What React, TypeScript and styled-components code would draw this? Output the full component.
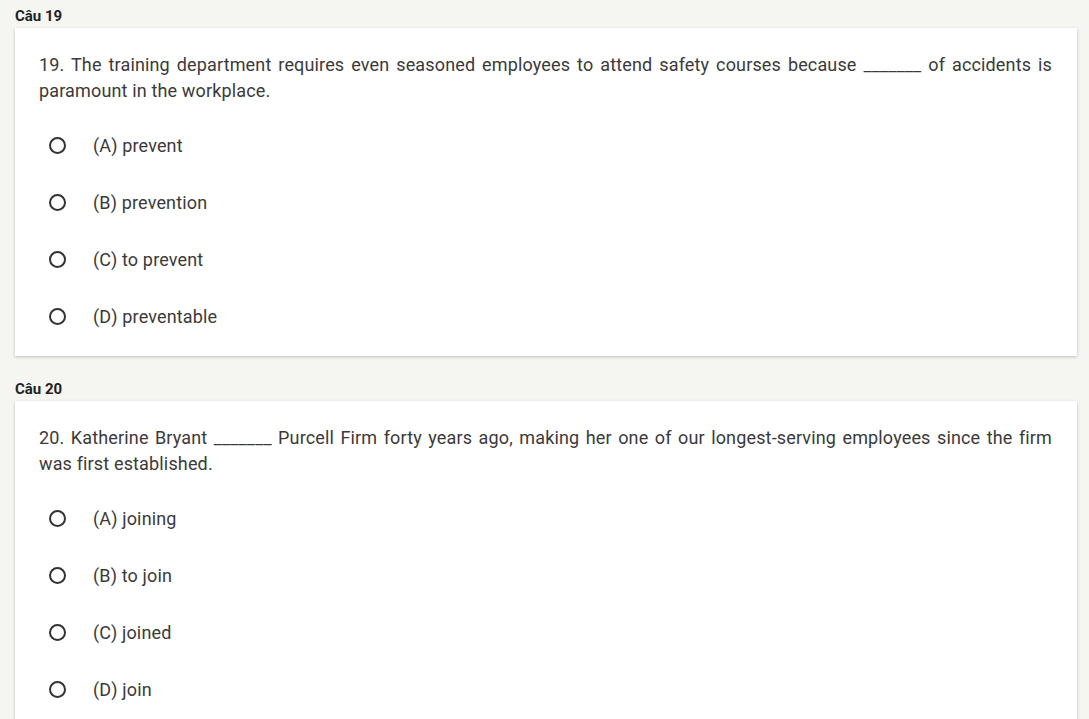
import styled, { createGlobalStyle } from 'styled-components';

interface Question {
  id: number;
  text: string;
  options: string[];
}

const questions: Question[] = [
  {
    id: 19,
    text: '19. The training department requires even seasoned employees to attend safety courses because _______ of accidents is paramount in the workplace.',
    options: ['(A) prevent', '(B) prevention', '(C) to prevent', '(D) preventable'],
  },
  {
    id: 20,
    text: '20. Katherine Bryant _______ Purcell Firm forty years ago, making her one of our longest-serving employees since the firm was first established.',
    options: ['(A) joining', '(B) to join', '(C) joined', '(D) join'],
  },
];

export default function App() {
  return (
    <>
      <GlobalStyle />
      <Page>
        {questions.map(q => (
          <Section key={q.id}>
            <Label>Câu {q.id}</Label>
            <Card>
              <QuestionText>{q.text}</QuestionText>
              <Options>
                {q.options.map(opt => (
                  <Option key={opt}>
                    <Radio />
                    <OptionText>{opt}</OptionText>
                  </Option>
                ))}
              </Options>
            </Card>
          </Section>
        ))}
      </Page>
    </>
  );
}

const GlobalStyle = createGlobalStyle`
  html, body {
    margin: 0;
    padding: 0;
    background: #f5f5f2;
    font-family: Roboto, 'Liberation Sans', sans-serif;
  }
`;

const Page = styled.div`
  padding: 6px 12px 0 15px;
  display: flex;
  flex-direction: column;
  gap: 23px;
`;

const Section = styled.section`
  display: flex;
  flex-direction: column;
  gap: 2px;
`;

const Label = styled.div`
  font-size: 15px;
  font-weight: 700;
  line-height: 20px;
  color: #222;
`;

const Card = styled.div`
  background: #fff;
  box-shadow: 0 1px 3px rgba(0, 0, 0, 0.22);
  padding: 24px 25px 11px 24px;
`;

const QuestionText = styled.p`
  margin: 0 0 13px;
  font-size: 18px;
  letter-spacing: 0.15px;
  line-height: 26px;
  color: #3a3a3a;
  text-align: justify;
`;

const Options = styled.div`
  display: flex;
  flex-direction: column;
`;

const Option = styled.label`
  height: 57px;
  display: flex;
  align-items: center;
  cursor: pointer;
`;

const Radio = styled.span`
  box-sizing: border-box;
  width: 17px;
  height: 17px;
  margin-left: 10px;
  border: 2px solid #333;
  border-radius: 50%;
  flex-shrink: 0;
`;

const OptionText = styled.span`
  margin-left: 27px;
  font-size: 18px;
  letter-spacing: 0.15px;
  color: #3a3a3a;
`;
